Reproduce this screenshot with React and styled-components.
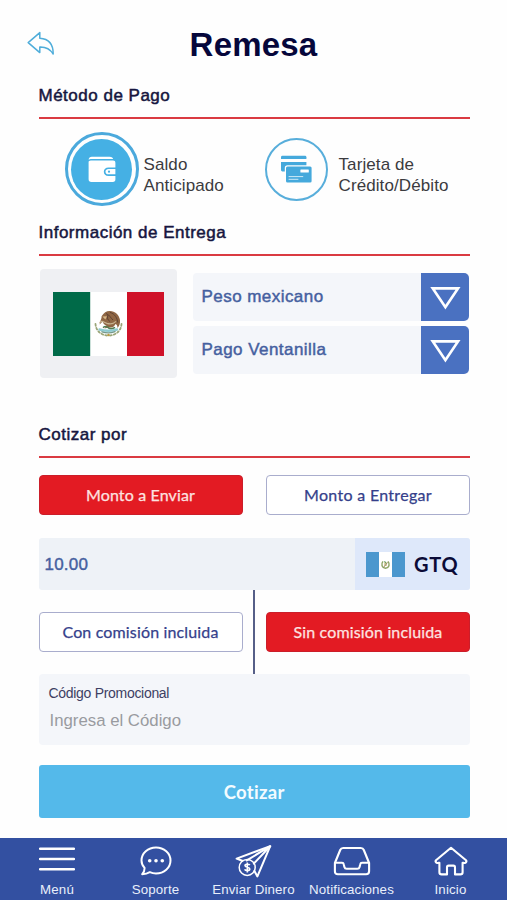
import React, { useState } from 'react'
import styled, { createGlobalStyle } from 'styled-components'

const BackIcon = () => (
  <svg width='28' height='25' viewBox='0 0 28 25' fill='none'>
    <path
      d='M1.2 11.6 L12.8 1.6 V7.3 C21 7.8 26.3 12.8 26.2 23 C23.2 18 19 15.7 12.8 15.9 V21.6 Z'
      stroke='#4fadda'
      strokeWidth='1.5'
      strokeLinejoin='round'
    />
  </svg>
)

const WalletIcon = () => (
  <svg width='28' height='27' viewBox='0 0 28 27'>
    <path d='M.6 3.8 C.8 1.8 2 .7 3.8 .7 H21.5 C23.8 .7 25 1.7 25.2 3 H3.8 C2.2 3 1.2 3.2 .6 3.8 Z' fill='#fff' />
    <path
      d='M3 4.6 H25 C26.6 4.6 27.4 5.4 27.4 7 V11.4 H20.5 C17.6 11.4 15.8 13.1 15.8 15.7 C15.8 18.3 17.6 20 20.5 20 H27.4 V23.2 C27.4 25 26.6 26 24.8 26 H3.4 C1.6 26 .6 25 .6 23.2 V5.6 C1.2 4.9 2 4.6 3 4.6 Z'
      fill='#fff'
    />
    <path d='M27.4 13.1 H20.7 C18.6 13.1 17.5 14.2 17.5 15.7 C17.5 17.3 18.6 18.3 20.7 18.3 H27.4 Z' fill='#fff' />
    <circle cx='21' cy='15.7' r='1.1' fill='#45b0e4' />
  </svg>
)

const CardsIcon = () => (
  <svg width='32' height='28' viewBox='0 0 32 28'>
    <path d='M1 2.2 Q1 .8 2.4 .8 H25 Q26.4 .8 26.4 2.2 V4 H1 Z' fill='#45a9dc' />
    <path d='M1 7 H26.4 V10.2 H7.6 Q4.8 10.2 4.8 13 V16.4 H2.4 Q1 16.4 1 15 Z' fill='#45a9dc' />
    <rect x='6' y='11.6' width='25.6' height='16' rx='1.5' fill='#45a9dc' />
    <rect x='20.4' y='14.4' width='8.4' height='3' rx='.5' fill='#fff' />
    <path d='M8.6 21.6 H23.2 M8.6 24.3 H18.4' stroke='#cfeaf7' strokeWidth='1' />
  </svg>
)

const MexicoFlag = () => (
  <svg width='111' height='64' viewBox='0 0 111 64'>
    <rect width='111' height='64' fill='#fff' />
    <rect width='37.2' height='64' fill='#006a48' />
    <rect x='74' width='37' height='64' fill='#cf1128' />
    <g fill='none' strokeLinecap='round'>
      <path d='M42.5 32 C43 39 48 43.3 55.5 43.6' stroke='#9aa578' strokeWidth='1.8' strokeDasharray='1.8 2.2' />
      <path d='M68.5 32 C68 39 63 43.3 55.5 43.6' stroke='#9aa578' strokeWidth='1.8' strokeDasharray='1.8 2.2' />
      <path d='M46.5 37.5 Q55.5 40 64 37.5' stroke='#8fcbd0' strokeWidth='2.4' />
      <path d='M49 39.8 Q55.5 42 62 39.6' stroke='#74988a' strokeWidth='1.4' />
    </g>
    <path
      d='M46.6 32.5 C46.8 29 49 26.5 48.6 24.2 C51 20.8 53.6 18.9 57 19.1 C62 19.2 66 22.8 67 28 C67.4 31.4 66.2 34.4 64.4 36 C64.6 33.6 63.8 32.6 62.4 32 C61.4 34.8 58.6 36.2 55.8 35.4 L51.4 36.4 L53.4 33.4 C51 32.8 49.8 31 49.8 29.2 Z'
      fill='#8f6644'
    />
    <path d='M53 21.5 C57 23 57.5 26 60 28 M57 20.4 C62 22 64.2 26 64.8 30.6 M55 23 C54 26 54.5 28 57 29.5' stroke='#5f4334' strokeWidth='1' fill='none' />
    <path d='M49.4 24.6 L54 24.2 L52.4 27.4 Z' fill='#d8b98a' />
    <path d='M46.6 31 C48 27.8 51 30.4 54 31.4 C58 32.6 61 31.4 63 29.4' stroke='#c7b28f' strokeWidth='1.2' fill='none' />
    <path d='M50 35.6 Q53 33.4 55.6 36 Q59 37.4 62 35.4' stroke='#547b50' strokeWidth='1.5' fill='none' />
    <circle cx='55.5' cy='43' r='1.2' fill='#b99b42' />
  </svg>
)

const GuatemalaFlag = () => (
  <svg width='39' height='25' viewBox='0 0 39 25'>
    <rect width='39' height='25' fill='#fff' />
    <rect width='13' height='25' fill='#4b97ce' />
    <rect x='26' width='13' height='25' fill='#4b97ce' />
    <path d='M17 9.4 C14.8 12.2 15.8 15.6 19.5 16.3 C23.2 15.6 24.2 12.2 22 9.4' stroke='#8ea565' strokeWidth='1.5' fill='none' />
    <rect x='18' y='10' width='3' height='4' fill='#ddd3ac' />
    <path d='M17.6 15.4 L21.6 10.4' stroke='#8d7a4d' strokeWidth='.8' />
    <path d='M18.6 9 L20 11.6' stroke='#5b9b5d' strokeWidth='1' />
  </svg>
)

const Arrow = () => (
  <svg width='31' height='25' viewBox='0 0 31 25' fill='none'>
    <path d='M2.8 2.4 H28 L15.4 21.2 Z' stroke='#fff' strokeWidth='2.7' />
  </svg>
)

const MenuIcon = () => (
  <svg width='36' height='34' viewBox='0 0 36 34'>
    <path d='M1 4.8 H35 M1 15 H35 M1 25.3 H35' stroke='#fff' strokeWidth='2.4' strokeLinecap='round' />
  </svg>
)

const ChatIcon = () => (
  <svg width='34' height='34' viewBox='0 0 34 34' fill='none'>
    <path
      d='M5.6 23.9 C3.4 21.6 2.5 19.3 2.5 16.5 C2.5 9.3 9 3.4 17 3.4 C25 3.4 31.5 9.3 31.5 16.5 C31.5 23.9 25 29.6 17 29.6 C14.8 29.6 12.7 29.1 10.8 28.2 C8.6 29.6 5.8 30.2 3.2 30.2 C4.8 28.6 5.6 26.4 5.6 23.9 Z'
      stroke='#fff'
      strokeWidth='2'
      strokeLinejoin='round'
    />
    <g fill='#fff'>
      <circle cx='10.7' cy='16.8' r='1.8' />
      <circle cx='17' cy='16.8' r='1.8' />
      <circle cx='23.3' cy='16.8' r='1.8' />
    </g>
  </svg>
)

const SendIcon = () => (
  <svg width='38' height='34' viewBox='0 0 38 34' fill='none'>
    <g stroke='#fff' strokeWidth='2' strokeLinejoin='round' strokeLinecap='round'>
      <path d='M7.2 16.8 L1.6 14.6 L35.2 2.2 L22.4 32.4 L19.4 27' />
      <path d='M35.2 2.2 L11.8 16.4 M35.2 2.2 L18.8 19.6' />
      <circle cx='12.2' cy='23.4' r='8' strokeWidth='1.5' />
    </g>
    <path d='M14.8 21.2 C14.2 20 10 19.6 10 21.6 C10 23.8 14.8 22.6 14.8 25.1 C14.8 27.2 10.4 27 9.6 25.4 M12.3 18.4 V28.4' stroke='#fff' strokeWidth='1.6' />
  </svg>
)

const InboxIcon = () => (
  <svg width='38' height='34' viewBox='0 0 38 34' fill='none' stroke='#fff' strokeWidth='2.1' strokeLinejoin='round'>
    <path d='M1.9 19 L7.2 6 Q8 4 10.2 4 H27.8 Q30 4 30.8 6 L36.1 19 V27.2 Q36.1 30.2 33.1 30.2 H4.9 Q1.9 30.2 1.9 27.2 Z' />
    <path d='M2 18.8 H9 C10 18.8 10.6 19.4 10.8 20.4 L11.4 23 C11.7 24.2 12.4 24.8 13.6 24.8 H24.4 C25.6 24.8 26.3 24.2 26.6 23 L27.2 20.4 C27.4 19.4 28 18.8 29 18.8 H36' />
  </svg>
)

const HomeIcon = () => (
  <svg width='36' height='34' viewBox='0 0 36 34' fill='none'>
    <path
      d='M18 3.8 L33 16.2 Q34 17.4 32.6 18.6 Q31.6 19.2 30.2 18.8 H29.6 V28.2 Q29.6 30.4 27.4 30.4 H22 V23.4 Q22 21.6 20.4 21.6 H15.6 Q14 21.6 14 23.4 V30.4 H8.6 Q6.4 30.4 6.4 28.2 V18.8 H5.8 Q4.4 19.2 3.4 18.6 Q2 17.4 3 16.2 Z'
      stroke='#fff'
      strokeWidth='2.1'
      strokeLinejoin='round'
    />
  </svg>
)

const navItems = [
  { label: 'Menú', icon: <MenuIcon />, width: 97 },
  { label: 'Soporte', icon: <ChatIcon />, width: 100 },
  { label: 'Enviar Dinero', icon: <SendIcon />, width: 96 },
  { label: 'Notificaciones', icon: <InboxIcon />, width: 100 },
  { label: 'Inicio', icon: <HomeIcon />, width: 98 },
]

const App = () => {
  const [quote, setQuote] = useState('enviar')
  const [fee, setFee] = useState('sin')

  return (
    <Wrapper>
      <GlobalStyle />
      <Header>
        <BackButton aria-label='Regresar'>
          <BackIcon />
        </BackButton>
        <h1>Remesa</h1>
      </Header>
      <Content>
        <SectionTitle>Método de Pago</SectionTitle>
        <Methods>
          <Method $width={191}>
            <Ring>
              <Disc>
                <WalletIcon />
              </Disc>
            </Ring>
            <p>
              Saldo
              <br />
              Anticipado
            </p>
          </Method>
          <Method>
            <Circle>
              <CardsIcon />
            </Circle>
            <p>
              Tarjeta de
              <br />
              Crédito/Débito
            </p>
          </Method>
        </Methods>

        <SectionTitle>Información de Entrega</SectionTitle>
        <Delivery>
          <FlagBox>
            <MexicoFlag />
          </FlagBox>
          <Selects>
            <Select>
              <span>Peso mexicano</span>
              <button aria-label='Moneda'>
                <Arrow />
              </button>
            </Select>
            <Select>
              <span>Pago Ventanilla</span>
              <button aria-label='Pago'>
                <Arrow />
              </button>
            </Select>
          </Selects>
        </Delivery>

        <SectionTitle>Cotizar por</SectionTitle>
        <Choices>
          <Choice $active={quote === 'enviar'} onClick={() => setQuote('enviar')}>
            Monto a Enviar
          </Choice>
          <Choice $active={quote === 'entregar'} $spacing='0.3px' onClick={() => setQuote('entregar')}>
            Monto a Entregar
          </Choice>
        </Choices>
        <Amount>
          <span>10.00</span>
          <Currency>
            <GuatemalaFlag />
            <strong>GTQ</strong>
          </Currency>
        </Amount>
        <FeeChoices>
          <Choice $active={fee === 'con'} onClick={() => setFee('con')}>
            Con comisión incluida
          </Choice>
          <Divider />
          <Choice $active={fee === 'sin'} onClick={() => setFee('sin')}>
            Sin comisión incluida
          </Choice>
        </FeeChoices>
        <Promo>
          <label htmlFor='promo'>Código Promocional</label>
          <input id='promo' placeholder='Ingresa el Código' autoComplete='off' />
        </Promo>
        <Submit>Cotizar</Submit>
      </Content>
      <Nav>
        {navItems.map((item) => (
          <NavItem key={item.label} $width={item.width}>
            {item.icon}
            <span>{item.label}</span>
          </NavItem>
        ))}
      </Nav>
    </Wrapper>
  )
}

const GlobalStyle = createGlobalStyle`
  * {
    box-sizing: border-box;
    margin: 0;
    padding: 0;
  }
  body {
    background: #fefefe;
    font-family: 'Liberation Sans', Arial, sans-serif;
  }
  button {
    border: none;
    cursor: pointer;
  }
  svg {
    display: block;
    flex-shrink: 0;
  }
`
const Wrapper = styled.div`
  width: 507px;
  height: 900px;
  display: flex;
  flex-direction: column;
  overflow: hidden;
`
const Header = styled.header`
  display: grid;
  grid-template-columns: 60px 1fr 60px;
  align-items: center;
  height: 80px;
  padding-top: 9px;
  h1 {
    text-align: center;
    font-size: 33px;
    line-height: 40px;
    font-weight: 700;
    letter-spacing: 0.2px;
    color: #06073b;
  }
`
const BackButton = styled.button`
  background: none;
  padding: 0 0 3px 27px;
`
const Content = styled.main`
  flex: 1;
  padding: 0 37px 0 38.5px;
`
const SectionTitle = styled.h2`
  height: 39px;
  padding-top: 5px;
  border-bottom: 2px solid #da3a41;
  font-size: 17px;
  line-height: 21px;
  font-weight: 400;
  letter-spacing: 0.5px;
  color: #16163f;
  -webkit-text-stroke: 0.5px #16163f;
`
const Methods = styled.div`
  display: flex;
  height: 98px;
  padding: 13px 0 0 26px;
`
const Method = styled.div`
  display: flex;
  align-items: center;
  height: 74px;
  width: ${({ $width }) => ($width ? `${$width}px` : 'auto')};
  p {
    padding-top: 12px;
    font-size: 17px;
    line-height: 21px;
    letter-spacing: 0.1px;
    color: #3b3b3f;
    white-space: nowrap;
  }
`
const Ring = styled.div`
  display: flex;
  align-items: center;
  justify-content: center;
  width: 74px;
  height: 74px;
  margin-right: 5px;
  border: 3px solid #4ba9dc;
  border-radius: 50%;
`
const Disc = styled.div`
  display: flex;
  align-items: center;
  justify-content: center;
  width: 61px;
  height: 61px;
  border-radius: 50%;
  background: #45b0e4;
`
const Circle = styled.div`
  display: flex;
  align-items: center;
  justify-content: center;
  width: 63px;
  height: 63px;
  margin: 0 11px 0 9px;
  border: 2px solid #58aedb;
  border-radius: 50%;
`
const Delivery = styled.div`
  display: flex;
  align-items: flex-start;
  height: 163px;
  padding: 13px 0 0 1px;
`
const FlagBox = styled.div`
  display: flex;
  align-items: center;
  justify-content: center;
  width: 137px;
  height: 109px;
  border-radius: 4px;
  background: #eff0f3;
`
const Selects = styled.div`
  flex: 1;
  display: flex;
  flex-direction: column;
  gap: 5px;
  padding: 4px 1px 0 16px;
`
const Select = styled.div`
  display: flex;
  align-items: center;
  height: 48px;
  border-radius: 4px;
  background: #f4f6fa;
  span {
    flex: 1;
    padding-left: 9px;
    font-size: 17px;
    letter-spacing: 0.45px;
    color: #4560a0;
    -webkit-text-stroke: 0.45px #4560a0;
  }
  button {
    display: flex;
    align-items: center;
    justify-content: center;
    width: 48px;
    height: 48px;
    padding-top: 2px;
    border-radius: 0 5px 5px 0;
    background: #4a71c1;
  }
`
const Choices = styled.div`
  display: flex;
  justify-content: space-between;
  padding: 17px 0 23px;
`
const Choice = styled.button`
  width: 204px;
  height: 40px;
  padding-bottom: 2px;
  border: 1px solid ${({ $active }) => ($active ? '#cb1e2a' : '#a9adcd')};
  border-radius: 4px;
  background: ${({ $active }) => ($active ? '#e31b23' : '#fff')};
  color: ${({ $active }) => ($active ? '#fde3e0' : '#353f8b')};
  font-family: Lato, sans-serif;
  font-size: 16px;
  letter-spacing: ${({ $spacing }) => $spacing || '0.15px'};
  -webkit-text-stroke: 0.25px currentColor;
`
const Amount = styled.div`
  display: flex;
  align-items: center;
  justify-content: space-between;
  height: 52px;
  padding-left: 6px;
  background: #eef2f7;
  border-radius: 3px;
  > span {
    padding-top: 1px;
    font-size: 17px;
    letter-spacing: 0.2px;
    color: #4560a0;
    -webkit-text-stroke: 0.4px #4560a0;
  }
`
const Currency = styled.div`
  display: flex;
  align-items: center;
  gap: 9px;
  width: 115px;
  height: 52px;
  padding-left: 11px;
  background: #dee8fa;
  border-radius: 0 3px 3px 0;
  strong {
    font-family: Lato, sans-serif;
    font-size: 20px;
    font-weight: 700;
    letter-spacing: 0.7px;
    color: #0b0b37;
  }
`
const FeeChoices = styled.div`
  display: flex;
  align-items: center;
  justify-content: space-between;
  height: 84px;
`
const Divider = styled.div`
  width: 2px;
  height: 84px;
  background: #565f88;
`
const Promo = styled.div`
  display: flex;
  flex-direction: column;
  height: 71px;
  padding: 10px 11px 0 10px;
  border-radius: 4px;
  background: #f4f6fa;
  label {
    font-size: 14px;
    line-height: 18px;
    letter-spacing: -0.3px;
    color: #3d3f63;
  }
  input {
    border: none;
    outline: 0;
    margin-top: 8px;
    padding-left: 1px;
    height: 22px;
    background: none;
    font-family: inherit;
    font-size: 16.8px;
    &::placeholder {
      color: #999ba0;
    }
  }
`
const Submit = styled.button`
  display: block;
  width: 100%;
  height: 53px;
  margin-top: 20px;
  border-radius: 3px;
  background: #54b9ea;
  color: #f3fbff;
  font-family: Lato, sans-serif;
  font-size: 18.5px;
  font-weight: 700;
  font-variant-ligatures: none;
  letter-spacing: 0.3px;
`
const Nav = styled.nav`
  display: flex;
  height: 62px;
  padding-left: 8.5px;
  background: #3350a1;
`
const NavItem = styled.a`
  display: flex;
  flex-direction: column;
  align-items: center;
  width: ${({ $width }) => $width}px;
  padding-top: 6px;
  color: #e9effb;
  span {
    margin-top: 4px;
    font-size: 13.3px;
    line-height: 16px;
    letter-spacing: 0.15px;
    white-space: nowrap;
  }
`
export default App
